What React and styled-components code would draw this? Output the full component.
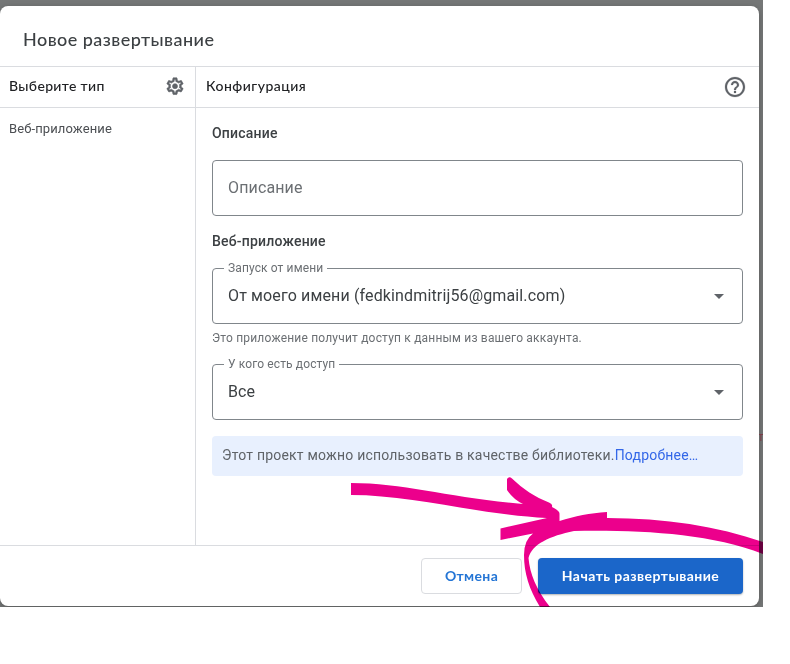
import React from 'react';
import styled, { createGlobalStyle } from 'styled-components';

const GlobalStyle = createGlobalStyle`
  *, *::before, *::after { box-sizing: border-box; }
  body {
    margin: 0;
    background: #fff;
    font-family: Roboto, 'Noto Sans', sans-serif;
    color: #3c4043;
  }
`;

const Backdrop = styled.div`
  position: relative;
  width: 763px;
  height: 607px;
  padding: 6px 4px 1px 0;
  background: #757777;
  overflow: hidden;
`;

const Dialog = styled.main`
  display: flex;
  flex-direction: column;
  width: 759px;
  height: 600px;
  border-radius: 8px;
  background: #fff;
  box-shadow: 0 2px 6px rgba(0, 0, 0, 0.25);
`;

const Header = styled.header`
  display: flex;
  align-items: center;
  height: 61px;
  padding: 5px 23px 0;
  border-bottom: 1px solid #dadce0;
`;

const brandFont = `font-family: Lato, 'Open Sans', sans-serif;`;

const Title = styled.h1`
  ${brandFont}
  margin: 0;
  font-size: 18px;
  font-weight: 500;
  letter-spacing: 0.45px;
  line-height: 24px;
  color: #3c4043;
`;

const Body = styled.div`
  display: grid;
  grid-template-columns: 196px 1fr;
  height: 479px;
  border-bottom: 1px solid #dadce0;
`;

const Sidebar = styled.aside`
  border-right: 1px solid #dadce0;
`;

const PanelHeader = styled.div`
  display: flex;
  align-items: center;
  justify-content: space-between;
  height: 41px;
  padding: 0 ${(p) => p.$right}px 0 ${(p) => p.$left}px;
  border-bottom: 1px solid #dadce0;
  svg { display: block; fill: #5f6368; stroke: #5f6368; stroke-linejoin: round; }
`;

const PanelTitle = styled.h2`
  ${brandFont}
  margin: -2px 0 0;
  font-size: 14px;
  font-weight: 500;
  letter-spacing: ${(p) => p.$tracking};
  line-height: 20px;
  color: #202124;
`;

const TypeItem = styled.div`
  padding: 11px 9px;
  font-size: 13px;
  line-height: 20px;
  letter-spacing: 0.1px;
  color: #4b4e52;
`;

const Form = styled.div`
  padding: 15px 16px 0;
`;

const SectionTitle = styled.h3`
  margin: ${(p) => p.$top || 0}px 0 17px;
  font-size: 14px;
  font-weight: 500;
  line-height: 20px;
  letter-spacing: 0.2px;
  color: #3c4043;
`;

const Field = styled.div`
  position: relative;
  display: flex;
  align-items: center;
  justify-content: space-between;
  height: 56px;
  padding: 0 18px 0 15px;
  border: 1px solid #80868b;
  border-radius: 4px;
  font-size: 16px;
  line-height: 24px;
  letter-spacing: 0.14px;
  color: ${(p) => (p.$placeholder ? '#6b6f73' : '#3c4043')};
`;

const FieldLabel = styled.span`
  position: absolute;
  top: -9px;
  left: 11px;
  padding: 0 4px;
  background: #fff;
  font-size: 12px;
  line-height: 16px;
  letter-spacing: 0.12px;
  color: #6b6f73;
`;

const Caret = styled.span`
  border: 5px solid transparent;
  border-top-color: #5f6368;
  border-bottom: 0;
`;

const Hint = styled.p`
  margin: 4px 0 16px;
  font-size: 12px;
  line-height: 20px;
  letter-spacing: 0.19px;
  color: #6b6f73;
`;

const Notice = styled.div`
  display: flex;
  align-items: center;
  height: 40px;
  margin-top: 16px;
  padding: 0 10px 2px;
  border-radius: 4px;
  background: #e8f0fe;
  font-size: 14px;
  letter-spacing: 0.2px;
  color: #5f6368;
`;

const Link = styled.a`
  color: #3367e8;
`;

const Footer = styled.footer`
  display: flex;
  align-items: center;
  justify-content: flex-end;
  gap: 16px;
  height: 60px;
  padding-right: 16px;
`;

const Button = styled.button`
  ${brandFont}
  width: ${(p) => p.$width}px;
  height: 36px;
  padding: 0 0 2px;
  border: ${(p) => (p.$primary ? '0' : '1px solid #dadce0')};
  border-radius: 4px;
  background: ${(p) => (p.$primary ? '#1b66c9' : '#fff')};
  box-shadow: ${(p) => (p.$primary ? '0 1px 2px rgba(60, 64, 67, 0.4)' : 'none')};
  font-size: 14px;
  font-weight: 700;
  letter-spacing: ${(p) => (p.$primary ? '0.45px' : '0.35px')};
  white-space: nowrap;
  color: ${(p) => (p.$primary ? '#fff' : '#2475d5')};
`;

const Marker = styled.svg`
  position: absolute;
  inset: 0;
  fill: #ec008c;
  mix-blend-mode: multiply;
  pointer-events: none;
`;

const PageLetter = styled.span`
  position: absolute;
  top: 429px;
  left: 758px;
  width: 5px;
  overflow: hidden;
  font-size: 12px;
  line-height: 16px;
  color: #7a3d48;
  clip-path: inset(0 0 0 1px);
`;

const GearIcon = () => (
  <svg width="20" height="20" viewBox="0 0 24 24" strokeWidth="0.7">
    <path d="M19.43 12.98c.04-.32.07-.64.07-.98s-.03-.66-.07-.98l2.11-1.65c.19-.15.24-.42.12-.64l-2-3.46c-.09-.16-.26-.25-.44-.25-.06 0-.12.01-.17.03l-2.49 1c-.52-.4-1.08-.73-1.69-.98l-.38-2.65C14.46 2.18 14.25 2 14 2h-4c-.25 0-.46.18-.49.42l-.38 2.65c-.61.25-1.17.59-1.69.98l-2.49-1c-.06-.02-.12-.03-.18-.03-.17 0-.34.09-.43.25l-2 3.46c-.13.22-.07.49.12.64l2.11 1.65c-.04.32-.07.65-.07.98s.03.66.07.98l-2.11 1.65c-.19.15-.24.42-.12.64l2 3.46c.09.16.26.25.44.25.06 0 .12-.01.17-.03l2.49-1c.52.4 1.08.73 1.69.98l.38 2.65c.03.24.24.42.49.42h4c.25 0 .46-.18.49-.42l.38-2.65c.61-.25 1.17-.59 1.69-.98l2.49 1c.06.02.12.03.18.03.17 0 .34-.09.43-.25l2-3.46c.12-.22.07-.49-.12-.64l-2.11-1.65zm-1.98-1.71c.04.31.05.52.05.73s-.02.43-.05.73l-.14 1.13.89.7 1.08.84-.7 1.21-1.27-.51-1.04-.42-.9.68c-.43.32-.84.56-1.25.73l-1.06.43-.16 1.13-.2 1.35h-1.4l-.19-1.35-.16-1.13-1.06-.43c-.43-.18-.83-.41-1.23-.71l-.91-.7-1.06.43-1.27.51-.7-1.21 1.08-.84.89-.7-.14-1.13c-.03-.31-.05-.54-.05-.74s.02-.43.05-.73l.14-1.13-.89-.7-1.08-.84.7-1.21 1.27.51 1.04.42.9-.68c.43-.32.84-.56 1.25-.73l1.06-.43.16-1.13.2-1.35h1.39l.19 1.35.16 1.13 1.06.43c.43.18.83.41 1.23.71l.91.7 1.06-.43 1.27-.51.7 1.21-1.07.85-.89.7.14 1.13z" transform="translate(0 -1)" />
    <circle cx="12" cy="11" r="3" />
  </svg>
);

const HelpIcon = () => (
  <svg width="24" height="24" viewBox="0 0 24 24" strokeWidth="0.2">
    <path d="M11 18h2v-2h-2v2zm1-16C6.48 2 2 6.48 2 12s4.48 10 10 10 10-4.48 10-10S17.52 2 12 2zm0 18c-4.41 0-8-3.59-8-8s3.59-8 8-8 8 3.59 8 8-3.59 8-8 8zm0-14c-2.21 0-4 1.79-4 4h2c0-1.1.9-2 2-2s2 .9 2 2c0 2-3 1.75-3 5h2c0-2.25 3-2.5 3-5 0-2.21-1.79-4-4-4z" />
  </svg>
);

const MarkerStrokes = () => (
  <Marker width="763" height="607" viewBox="0 0 763 607">
    <path
      d="M351 483 C405 483 451 498 523 504 Q513 499 507 490 V479 Q509 476 512 478.500
      C523 489 535 497 549 502.500 Q553 504 552 507 Q560 511 559.500 514 V521
      C575 516 590 513 607 512 V518 C665 518 717 526 763 542 V554
      C708 533 640 530 574 531 C550 536 532 544 528.500 558
      C530 574 536 589 550 607 H540 C529 589 524 573 524 555
      Q524 540 533 533.500 L500.500 540 V528.500 L547 518
      C481 515 413 495 351 495 Z"
    />
  </Marker>
);

export default function App() {
  return (
    <>
      <GlobalStyle />
      <Backdrop>
        <Dialog>
          <Header>
            <Title>Новое развертывание</Title>
          </Header>
          <Body>
            <Sidebar>
              <PanelHeader $left={9} $right={10}>
                <PanelTitle $tracking="0.35px">Выберите тип</PanelTitle>
                <GearIcon />
              </PanelHeader>
              <TypeItem>Веб-приложение</TypeItem>
            </Sidebar>
            <section>
              <PanelHeader $left={10} $right={12}>
                <PanelTitle $tracking="0.5px">Конфигурация</PanelTitle>
                <HelpIcon />
              </PanelHeader>
              <Form>
                <SectionTitle>Описание</SectionTitle>
                <Field $placeholder>Описание</Field>
                <SectionTitle $top={15}>Веб-приложение</SectionTitle>
                <Field>
                  <FieldLabel>Запуск от имени</FieldLabel>
                  От моего имени (fedkindmitrij56@gmail.com)
                  <Caret />
                </Field>
                <Hint>Это приложение получит доступ к данным из вашего аккаунта.</Hint>
                <Field>
                  <FieldLabel>У кого есть доступ</FieldLabel>
                  Все
                  <Caret />
                </Field>
                <Notice>
                  Этот проект можно использовать в качестве библиотеки.
                  <Link>Подробнее…</Link>
                </Notice>
              </Form>
            </section>
          </Body>
          <Footer>
            <Button $width={101}>Отмена</Button>
            <Button $primary $width={205}>Начать развертывание</Button>
          </Footer>
        </Dialog>
        <PageLetter>т</PageLetter>
        <MarkerStrokes />
      </Backdrop>
    </>
  );
}
